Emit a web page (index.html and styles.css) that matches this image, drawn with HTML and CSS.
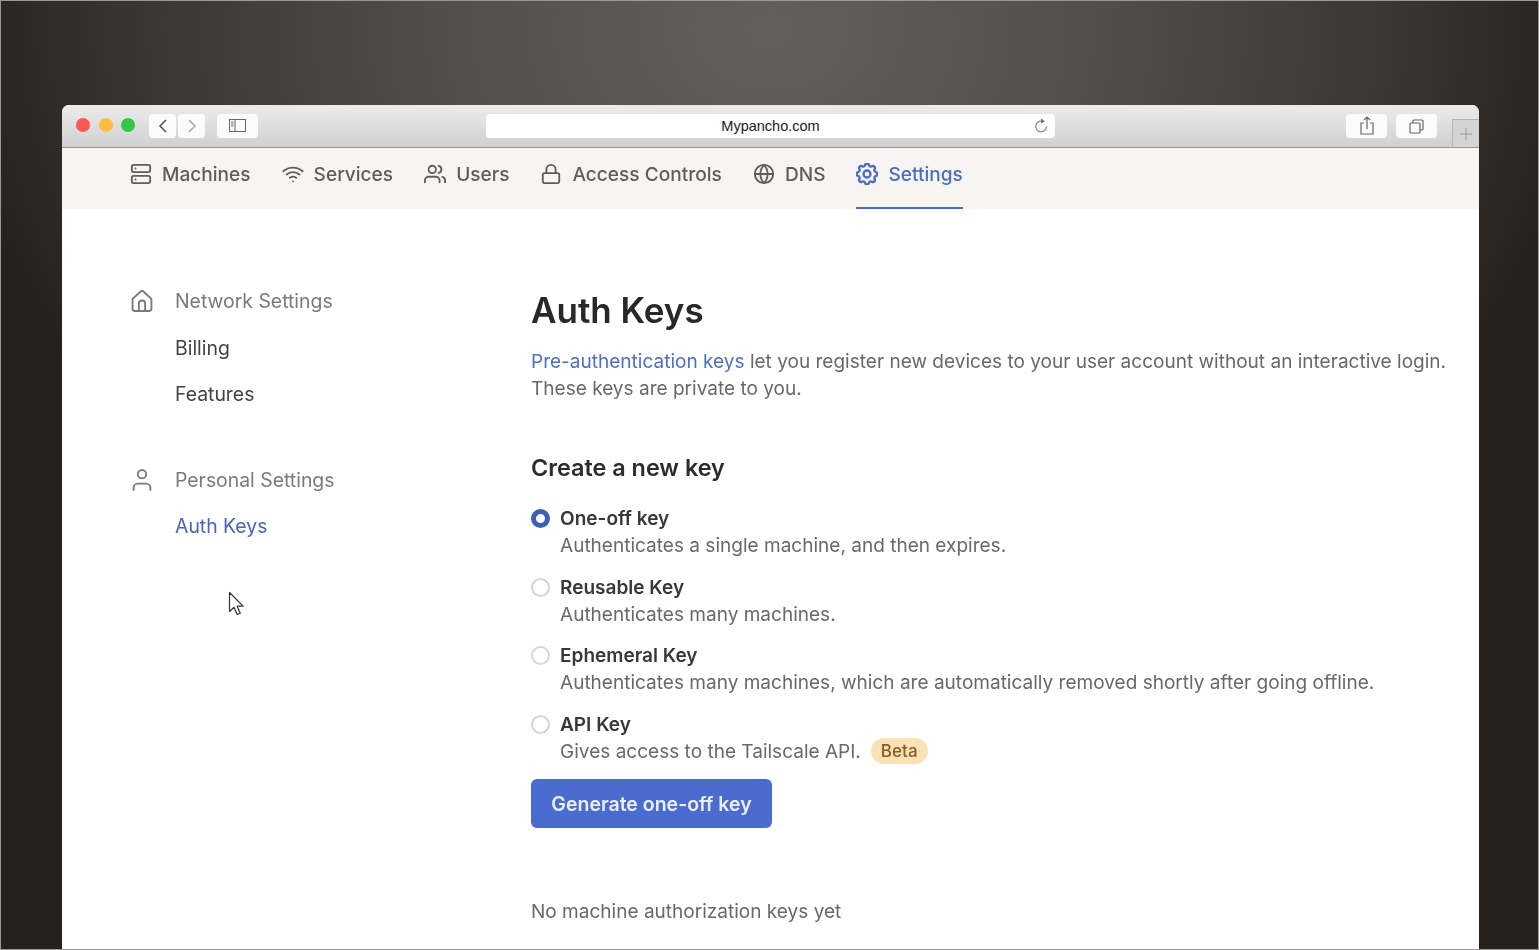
FILE: index.html
```html
<!DOCTYPE html>
<html>
<head>
  <title>Auth Keys</title>
  <link rel="stylesheet" href="styles.css">
</head>
<body>
  <div class="window">
    <div class="toolbar">
      <div class="lights">
        <span class="light red"></span>
        <span class="light yellow"></span>
        <span class="light green"></span>
      </div>
      <div class="history">
        <div class="tool-btn arrow-btn">
          <svg width="12" height="18" viewBox="0 0 12 18"><path d="M9 3 3 9l6 6" fill="none" stroke="#555" stroke-width="1.600"/></svg>
        </div>
        <div class="tool-btn arrow-btn">
          <svg width="12" height="18" viewBox="0 0 12 18"><path d="M3 3l6 6-6 6" fill="none" stroke="#aaa" stroke-width="1.600"/></svg>
        </div>
      </div>
      <div class="tool-btn wide-btn sidebar-btn">
        <svg width="18" height="14" viewBox="0 0 18 14" fill="none" stroke="#666"><rect x=".5" y=".5" width="16" height="12"/><path d="M6 .5v12M2 3h2.500M2 5h2.500M2 7h2.500" stroke-width="1"/></svg>
      </div>
      <div class="url-bar">
        <span class="url-text">Mypancho.com</span>
        <svg class="reload" width="16" height="16" viewBox="0 0 16 16" fill="none"><path d="M8.500 3.200A5.300 5.300 0 1 0 13.300 8.500" stroke="#888" stroke-width="1.200"/><path d="M8 .6l4 2.700-4 2.500z" fill="#777"/></svg>
      </div>
      <div class="tool-btn wide-btn share-btn">
        <svg width="14" height="20" viewBox="0 0 14 20" fill="none" stroke="#666" stroke-width="1.200"><path d="M4 7H1v11h12V7h-3M7 13V1M4 4l3-3 3 3"/></svg>
      </div>
      <div class="tool-btn wide-btn tabs-btn">
        <svg width="15" height="15" viewBox="0 0 15 15" fill="none" stroke="#666" stroke-width="1.200"><rect x="1" y="4" width="10" height="10" rx="1"/><path d="M4 4V2a1 1 0 0 1 1-1h8a1 1 0 0 1 1 1v8a1 1 0 0 1-1 1h-2"/></svg>
      </div>
      <div class="new-tab">
        <svg width="14" height="14" viewBox="0 0 14 14"><path d="M7 1v12M1 7h12" stroke="#999" stroke-width="1"/></svg>
      </div>
    </div>

    <nav class="topnav">
      <a class="nav-item">
        <svg class="icon" viewBox="0 0 24 24"><rect x="2" y="2" width="20" height="8" rx="2"/><rect x="2" y="14" width="20" height="8" rx="2"/><path d="M6 6h.01M6 18h.01"/></svg>
        Machines
      </a>
      <a class="nav-item">
        <svg class="icon" viewBox="0 0 24 24"><path d="M5 12.550a11 11 0 0 1 14.080 0"/><path d="M1.420 9a16 16 0 0 1 21.160 0"/><path d="M8.530 16.110a6 6 0 0 1 6.950 0"/><path d="M12 20h.01"/></svg>
        Services
      </a>
      <a class="nav-item">
        <svg class="icon" viewBox="0 0 24 24"><path d="M17 21v-2a4 4 0 0 0-4-4H5a4 4 0 0 0-4 4v2"/><circle cx="9" cy="7" r="4"/><path d="M23 21v-2a4 4 0 0 0-3-3.870"/><path d="M16 3.130a4 4 0 0 1 0 7.750"/></svg>
        Users
      </a>
      <a class="nav-item">
        <svg class="icon" viewBox="0 0 24 24"><rect x="3" y="11" width="18" height="11" rx="2"/><path d="M7 11V7a5 5 0 0 1 10 0v4"/></svg>
        Access Controls
      </a>
      <a class="nav-item">
        <svg class="icon" viewBox="0 0 24 24"><circle cx="12" cy="12" r="10"/><path d="M2 12h20"/><path d="M12 2a15.300 15.300 0 0 1 4 10 15.300 15.300 0 0 1-4 10 15.300 15.300 0 0 1-4-10 15.300 15.300 0 0 1 4-10z"/></svg>
        DNS
      </a>
      <a class="nav-item active">
        <svg class="icon" viewBox="2.500 2.500 19 19"><path d="M10.325 4.317c.426-1.756 2.924-1.756 3.350 0a1.724 1.724 0 0 0 2.573 1.066c1.543-.94 3.310.826 2.370 2.370a1.724 1.724 0 0 0 1.065 2.572c1.756.426 1.756 2.924 0 3.350a1.724 1.724 0 0 0-1.066 2.573c.94 1.543-.826 3.310-2.370 2.370a1.724 1.724 0 0 0-2.572 1.065c-.426 1.756-2.924 1.756-3.350 0a1.724 1.724 0 0 0-2.573-1.066c-1.543.94-3.310-.826-2.370-2.370a1.724 1.724 0 0 0-1.065-2.572c-1.756-.426-1.756-2.924 0-3.350a1.724 1.724 0 0 0 1.066-2.573c-.94-1.543.826-3.310 2.370-2.370.996.608 2.296.07 2.572-1.065z"/><circle cx="12" cy="12" r="3"/></svg>
        Settings
      </a>
    </nav>

    <div class="page">
      <aside class="sidebar">
        <div class="side-group">
          <div class="side-head">
            <svg class="icon" viewBox="2 2 20 21"><path d="M3 10.500 10.700 3.400a2 2 0 0 1 2.600 0L21 10.500V20a2 2 0 0 1-2 2H5a2 2 0 0 1-2-2z"/><path d="M9 22v-7a3 3 0 0 1 6 0v7"/></svg>
            Network Settings
          </div>
          <a class="side-link">Billing</a>
          <a class="side-link">Features</a>
        </div>
        <div class="side-group">
          <div class="side-head">
            <svg class="icon" viewBox="2 1 20 21"><path d="M20 21v-2a4 4 0 0 0-4-4H8a4 4 0 0 0-4 4v2"/><circle cx="12" cy="6" r="4"/></svg>
            Personal Settings
          </div>
          <a class="side-link current">Auth Keys</a>
        </div>
      </aside>

      <main class="content">
        <h1>Auth Keys</h1>
        <p class="intro"><a class="link">Pre-authentication keys</a> let you register new devices to your user account without an interactive login. These keys are private to you.</p>

        <h2>Create a new key</h2>

        <div class="key-options">
          <div class="key-option">
            <span class="radio checked"></span>
            <div>
              <div class="key-name">One-off key</div>
              <div class="key-desc">Authenticates a single machine, and then expires.</div>
            </div>
          </div>
          <div class="key-option">
            <span class="radio"></span>
            <div>
              <div class="key-name">Reusable Key</div>
              <div class="key-desc">Authenticates many machines.</div>
            </div>
          </div>
          <div class="key-option">
            <span class="radio"></span>
            <div>
              <div class="key-name">Ephemeral Key</div>
              <div class="key-desc">Authenticates many machines, which are automatically removed shortly after going offline.</div>
            </div>
          </div>
          <div class="key-option">
            <span class="radio"></span>
            <div>
              <div class="key-name">API Key</div>
              <div class="key-desc">Gives access to the Tailscale API. <span class="badge">Beta</span></div>
            </div>
          </div>
        </div>

        <button class="generate">Generate one-off key</button>

        <p class="empty">No machine authorization keys yet</p>
      </main>
    </div>

    <svg class="cursor" width="18" height="26" viewBox="0 0 18 26"><path d="M1.500 1.500v19l4.500-4.300 3.300 7.300 3-1.300-3.200-7h6z" fill="#fff" stroke="#333" stroke-width="1.200" stroke-linejoin="round"/></svg>
  </div>
</body>
</html>
```

FILE: styles.css
```css
* {
  box-sizing: border-box;
}
html, body {
  margin: 0;
  height: 950px;
  overflow: hidden;
}
body {
  padding: 104px 59px 0 61px;
  border: 1px solid #9a9896;
  background: radial-gradient(ellipse 820px 640px at 770px 30px, #64605d 0%, #524e4b 40%, #3b3734 75%, #25211d 100%), #25211d;
  background-color: #25211d;
  font-family: Inter, "Noto Sans", sans-serif;
}
.window {
  position: relative;
  height: 845px;
  background: #fff;
  border-radius: 7px 7px 0 0;
  overflow: hidden;
}

/* browser chrome */
.toolbar {
  display: flex;
  align-items: flex-start;
  height: 43px;
  padding: 9px 0 0 14px;
  background: linear-gradient(#ececec, #d0d0d0);
  border-bottom: 1px solid #98989a;
}
.lights {
  display: flex;
  gap: 8.500px;
  margin-top: 4px;
}
.light {
  width: 14px;
  height: 14px;
  border-radius: 50%;
}
.red { background: #fc5753; }
.yellow { background: #fdbc40; }
.green { background: #33c748; }
.history {
  display: flex;
  gap: 2px;
  margin-left: 14px;
}
.tool-btn {
  display: flex;
  align-items: center;
  justify-content: center;
  height: 24px;
  background: #fbfbfb;
  border-radius: 4px;
}
.arrow-btn { width: 27px; }
.wide-btn { width: 41px; }
.sidebar-btn { margin-left: 12px; }
.url-bar {
  position: relative;
  width: 569px;
  height: 24px;
  margin-left: 228px;
  background: #fff;
  border-radius: 4px;
  text-align: center;
  font-family: "Liberation Sans", Arial, sans-serif;
  font-size: 14.500px;
  line-height: 25px;
  color: #222;
}
.reload {
  position: absolute;
  right: 6px;
  top: 4px;
}
.share-btn { margin-left: 291px; }
.tabs-btn { margin-left: 9px; }
.new-tab {
  display: flex;
  align-items: center;
  justify-content: center;
  width: 27px;
  height: 28px;
  margin: 5px 0 0 15px;
  background: #d4d4d4;
  border: 1px solid #b4b4b4;
  border-right: none;
  border-bottom: none;
}

/* app nav */
.topnav {
  display: flex;
  gap: 31px;
  height: 61px;
  padding-left: 68px;
  background: #f6f5f3;
  font-size: 19.100px;
  font-weight: 500;
  color: #5f5c5a;
  filter: blur(.4px);
}
.nav-item {
  display: flex;
  align-items: center;
  gap: 10px;
  height: 61px;
  padding-bottom: 8px;
  border-bottom: 2px solid transparent;
}
.nav-item.active {
  color: #4c6cc0;
  border-bottom-color: #4c6cc0;
}
.icon {
  width: 22px;
  height: 22px;
  flex: none;
  fill: none;
  stroke: currentColor;
  stroke-width: 2;
  stroke-linecap: round;
  stroke-linejoin: round;
}

/* page */
.page {
  display: flex;
  filter: blur(.4px);
}
.sidebar {
  width: 469px;
  padding: 69px 0 0 69px;
  font-size: 19.400px;
  flex: none;
}
.side-group {
  margin-bottom: 39px;
}
.side-head {
  display: flex;
  align-items: center;
  gap: 22px;
  height: 46.500px;
  color: #7c7a78;
  font-weight: 400;
}
.side-head .icon {
  stroke-width: 1.800;
}
.side-link {
  display: block;
  height: 46.500px;
  line-height: 46.500px;
  padding-left: 44px;
  color: #45423f;
}
.side-link.current {
  color: #4c64b4;
}
.content {
  flex: 1;
  padding-top: 76px;
  font-size: 19.050px;
  line-height: 27px;
  color: #6b6865;
}
h1 {
  margin: 0;
  font-size: 35px;
  line-height: 50px;
  font-weight: 600;
  color: #292827;
}
.intro {
  margin: 13px 0 0;
}
.link {
  color: #4f6fc0;
}
h2 {
  margin: 49px 0 0;
  font-size: 23.400px;
  line-height: 34px;
  font-weight: 600;
  color: #2e2c2b;
}
.key-options {
  margin-top: 20px;
}
.key-option {
  display: flex;
  gap: 10px;
  margin-bottom: 14.500px;
}
.radio {
  width: 19px;
  height: 19px;
  margin-top: 4px;
  flex: none;
  background: #fff;
  border: 2px solid #d8d6d4;
  border-radius: 50%;
}
.radio.checked {
  border: 5.500px solid #3f5fb5;
}
.key-name {
  font-weight: 600;
  color: #3a3836;
}
.key-desc {
  display: flex;
  align-items: center;
  gap: 10px;
}
.badge {
  height: 26px;
  padding: 0 10px;
  background: #f9e2b3;
  border-radius: 13px;
  font-size: 17px;
  line-height: 26px;
  font-weight: 500;
  color: #8a5a2c;
}
.generate {
  display: block;
  width: 241px;
  height: 49px;
  margin-top: 12px;
  padding: 0;
  background: #4a6cce;
  border: none;
  border-radius: 6px;
  font-family: inherit;
  font-size: 19.500px;
  font-weight: 600;
  color: #e9eefb;
}
.empty {
  margin: 70px 0 0;
}
.cursor {
  position: absolute;
  left: 166px;
  top: 486px;
}
```
